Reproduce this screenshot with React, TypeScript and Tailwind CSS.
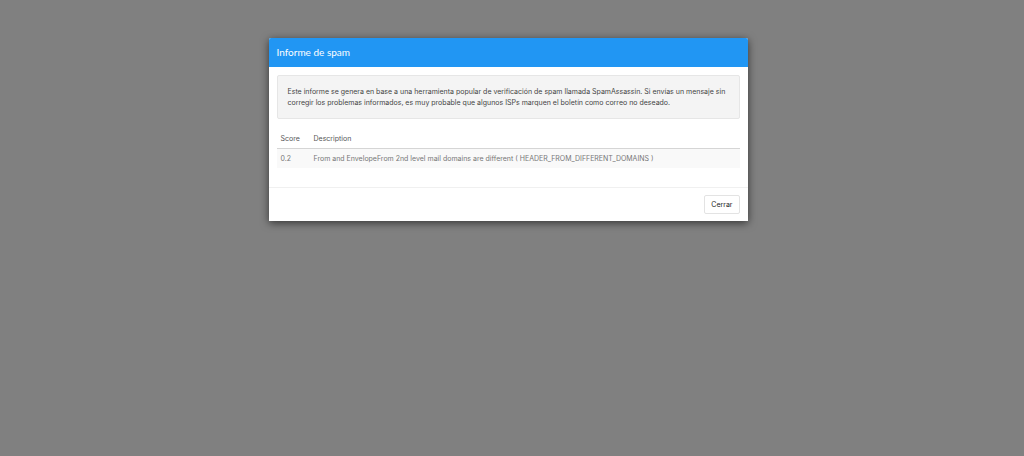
const results = [
  {
    score: "0.2",
    description:
      "From and EnvelopeFrom 2nd level mail domains are different ( HEADER_FROM_DIFFERENT_DOMAINS )",
  },
]

export default function App() {
  return (
    <div className="min-h-screen bg-[#808080] py-[38px] pr-6 pl-4 font-['Inter',sans-serif] text-[7px] leading-[11px] text-[#444]">
      <div
        role="dialog"
        aria-labelledby="spam-report-title"
        className="mx-auto w-full max-w-[479px] rounded-t-xs bg-white shadow-[0_2px_8px_rgba(0,0,0,0.6)]"
      >
        <header className="rounded-t-xs bg-[#2196f3] p-2">
          <h1
            id="spam-report-title"
            className="font-['Lato',sans-serif] text-[10px] leading-[13px] text-white"
          >
            Informe de spam
          </h1>
        </header>

        <div className="px-2 pt-2 pb-[19px]">
          <p className="mb-[10px] rounded-xs border border-[#e6e6e6] bg-[#f4f4f4] p-[10px]">
            Este informe se genera en base a una herramienta popular de verificación de spam llamada
            SpamAssassin. Si envías un mensaje sin corregir los problemas informados, es muy probable
            que algunos ISPs marquen el boletín como correo no deseado.
          </p>
          <table className="w-full text-left">
            <thead className="text-[#555]">
              <tr className="border-b border-[#d5d5d5]">
                <th className="w-[33px] px-1 py-1 font-normal">Score</th>
                <th className="px-1 py-1 font-normal">Description</th>
              </tr>
            </thead>
            <tbody className="text-[#777]">
              {results.map((result) => (
                <tr key={result.description} className="bg-[#f9f9f9]">
                  <td className="px-1 py-1">{result.score}</td>
                  <td className="px-1 py-1">{result.description}</td>
                </tr>
              ))}
            </tbody>
          </table>
        </div>

        <footer className="flex justify-end border-t border-[#f0f0f0] px-2 py-[7px]">
          <button
            type="button"
            className="rounded-xs border border-[#e3e3e3] bg-white px-[6px] py-[3px] text-[#222]"
          >
            Cerrar
          </button>
        </footer>
      </div>
    </div>
  )
}
